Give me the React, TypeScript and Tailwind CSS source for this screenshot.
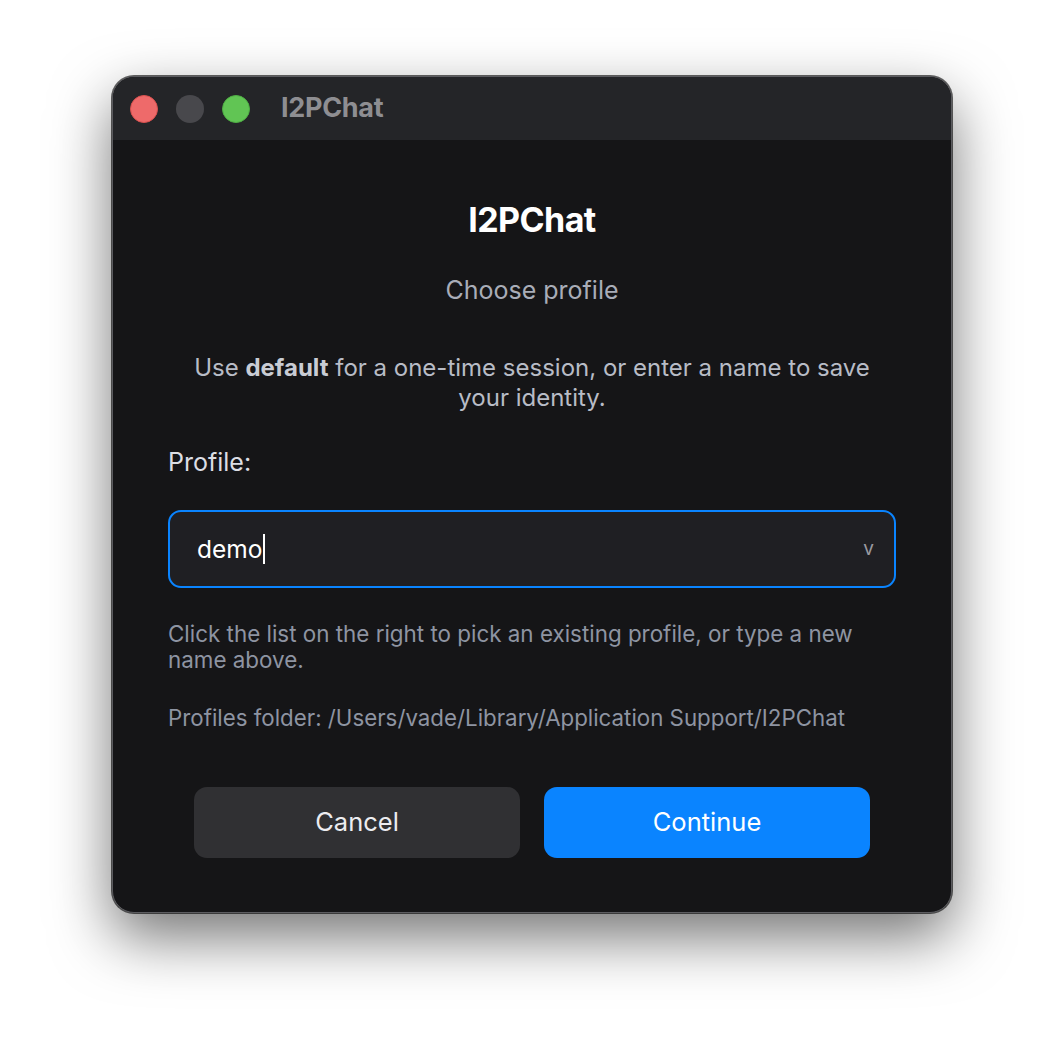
const App = () => {
  return (
    <div className="w-[1064px] h-[1062px] bg-white pt-[76px] pl-[112px] font-['Inter',sans-serif]">
      <div className="w-[840px] h-[837px] rounded-[22px] bg-[#151517] border border-[#5c5c60] shadow-[0_24px_60px_rgba(0,0,0,0.55),0_0_0_1px_rgba(0,0,0,0.6)] overflow-hidden flex flex-col">

        {/* Title bar */}
        <div className="h-[63px] bg-[#242528] flex items-center pl-[17px] shrink-0">
          <div className="flex items-center gap-[18px]">
            <span className="w-[28px] h-[28px] rounded-full bg-[#ee6a6a] border border-[#d9514f]" />
            <span className="w-[28px] h-[28px] rounded-full bg-[#48484c]" />
            <span className="w-[28px] h-[28px] rounded-full bg-[#61c554] border border-[#4fae44]" />
          </div>
          <span className="ml-[31px] text-[27px] font-bold text-[#8e8e92] tracking-[-0.3px]">I2PChat</span>
        </div>

        {/* Body */}
        <div className="flex flex-col px-[55px]">
          <h1 className="mt-[58px] text-center text-[34px] leading-[44px] font-bold text-white tracking-[-0.6px]">
            I2PChat
          </h1>
          <p className="mt-[33px] text-center text-[25px] leading-[30px] text-[#a9adb8]">
            Choose profile
          </p>
          <p className="mt-[48px] text-center text-[24px] leading-[30px] text-[#b8bcc6] px-[24px]">
            Use <b className="font-bold text-[#c9ccd4]">default</b> for a one-time session, or enter a name to save your identity.
          </p>
          <label className="mt-[34px] text-[25px] leading-[30px] text-[#dcdee4]">Profile:</label>

          {/* Combo */}
          <div className="mt-[33px] h-[78px] rounded-[13px] border-2 border-[#0a84ff] bg-[#1f1f23] flex items-center pl-[27px] pr-[20px]">
            <span className="text-[24.5px] text-white">demo</span>
            <span className="w-[1.5px] h-[30px] bg-white ml-[1px]" />
            <span className="ml-auto text-[19px] text-[#9a9aa0]">v</span>
          </div>

          <p className="mt-[33px] text-[22.4px] leading-[26px] text-[#8e94a2]">
            Click the list on the right to pick an existing profile, or type a new name above.
          </p>
          <p className="mt-[32px] text-[22.3px] leading-[26px] text-[#8e94a2]">
            Profiles folder: /Users/vade/Library/Application Support/I2PChat
          </p>

          {/* Buttons */}
          <div className="mt-[56px] flex justify-center gap-[24px]">
            <button type="button" className="w-[326px] h-[71px] rounded-[13px] bg-[#303033] text-[25.5px] text-[#ececf0]">
              Cancel
            </button>
            <button type="button" className="w-[326px] h-[71px] rounded-[13px] bg-[#0a84ff] text-[25.5px] text-white">
              Continue
            </button>
          </div>
        </div>
      </div>
    </div>
  );
};

export default App;
